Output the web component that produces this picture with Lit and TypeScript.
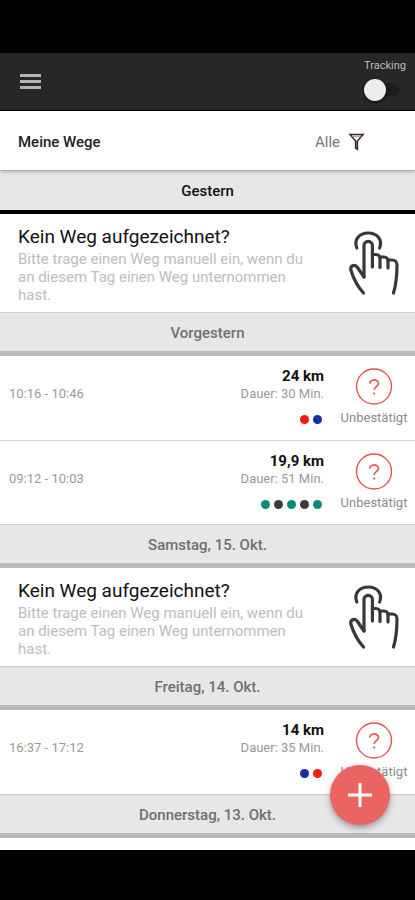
import { LitElement, html, css, nothing } from "lit";
import { customElement, property } from "lit/decorators.js";

interface Trip {
  time: string;
  distance: string;
  duration: string;
  modes: string[];
}

interface Day {
  label: string;
  active?: boolean;
  trips: Trip[];
}

const days: Day[] = [
  { label: "Gestern", active: true, trips: [] },
  {
    label: "Vorgestern",
    trips: [
      { time: "10:16 - 10:46", distance: "24 km", duration: "Dauer: 30 Min.", modes: ["red", "blue"] },
      { time: "09:12 - 10:03", distance: "19,9 km", duration: "Dauer: 51 Min.", modes: ["green", "dark", "green", "dark", "green"] },
    ],
  },
  { label: "Samstag, 15. Okt.", trips: [] },
  {
    label: "Freitag, 14. Okt.",
    trips: [{ time: "16:37 - 17:12", distance: "14 km", duration: "Dauer: 35 Min.", modes: ["blue", "red"] }],
  },
];

@customElement("day-header")
class DayHeader extends LitElement {
  @property() label = "";
  @property({ type: Boolean, reflect: true }) active = false;

  static styles = css`
    :host {
      display: block;
      border-top: 1px solid #cdcdcd;
      border-bottom: 5px solid #bababa;
      background: #e7e7e7;
    }
    :host([active]) {
      border-bottom: 4px solid #000;
    }
    h2 {
      margin: 0;
      padding-top: 2px;
      font-size: 15px;
      line-height: 36px;
      font-weight: 500;
      text-align: center;
      color: #707070;
    }
    :host([active]) h2 {
      padding-bottom: 1px;
      color: #111;
    }
  `;

  render() {
    return html`<h2>${this.label}</h2>`;
  }
}

@customElement("empty-day")
class EmptyDay extends LitElement {
  static styles = css`
    :host {
      display: flex;
      align-items: flex-start;
      justify-content: space-between;
      min-height: 98px;
      box-sizing: border-box;
      padding: 10px 12px 8px 18px;
      background: #fff;
    }
    .text {
      max-width: 300px;
    }
    h3 {
      margin: 0;
      font-size: 19px;
      line-height: 26px;
      font-weight: 400;
      color: #111;
    }
    p {
      margin: 0;
      font-size: 15px;
      line-height: 18px;
      color: #bdbdbd;
    }
    button {
      flex: none;
      margin: 0;
      padding: 5px 0 0;
      border: 0;
      background: none;
    }
    svg {
      display: block;
    }
  `;

  render() {
    return html`
      <div class="text">
        <h3>Kein Weg aufgezeichnet?</h3>
        <p>Bitte trage einen Weg manuell ein, wenn du an diesem Tag einen Weg unternommen hast.</p>
      </div>
      <button aria-label="Weg eintragen">
        <svg width="56" height="68" viewBox="0 0 56 68" fill="none" stroke="#383838" stroke-width="3.200" stroke-linecap="round" stroke-linejoin="round">
          <path d="M9.800 19C6.500 10.500 12.500 4 21.200 4S36 10.500 32.600 19" />
          <path d="M17 48V16.500a4.200 4.200 0 0 1 8.400 0V38" />
          <path d="M25.400 25.500h3.600a4 4 0 0 1 4 4V38.500" />
          <path d="M33 28h4a4 4 0 0 1 4 4V39" />
          <path d="M41 31h4.200a4.800 4.800 0 0 1 4.800 4.800c0 11-.4 18-3.500 28.200" />
          <path d="M17 48L10.500 38.500C7.500 34.500 2.700 37 4 41.500C6.500 49.500 10.500 57.500 16.500 64" />
        </svg>
      </button>
    `;
  }
}

@customElement("trip-row")
class TripRow extends LitElement {
  @property({ attribute: false }) trip!: Trip;

  static styles = css`
    :host {
      display: grid;
      grid-template-columns: 1fr auto 66px;
      column-gap: 17px;
      min-height: 84px;
      box-sizing: border-box;
      padding: 11px 8px 0 9px;
      background: #fff;
    }
    :host(:not(:first-of-type)) {
      border-top: 1px solid #d2d2d2;
    }
    .time {
      padding-top: 18px;
      font-size: 13px;
      line-height: 18px;
      color: #999;
    }
    .facts {
      display: flex;
      flex-direction: column;
      align-items: flex-end;
    }
    .distance {
      font-size: 15px;
      line-height: 18px;
      font-weight: 700;
      color: #111;
    }
    .duration {
      font-size: 13px;
      line-height: 18px;
      color: #999;
    }
    .modes {
      display: flex;
      gap: 4px;
      padding: 12px 2px 0 0;
    }
    .dot {
      width: 9px;
      height: 9px;
      border-radius: 50%;
    }
    .red {
      background: #f01c0c;
    }
    .blue {
      background: #182ca8;
    }
    .green {
      background: #0c8a74;
    }
    .dark {
      background: #3a3a3a;
    }
    button {
      display: flex;
      flex-direction: column;
      align-items: center;
      justify-content: flex-start;
      margin: 0;
      padding: 1px 0 0;
      border: 0;
      background: none;
      font: inherit;
      font-size: 13px;
      line-height: 18px;
      color: #8c8c8c;
    }
    svg {
      display: block;
      margin-bottom: 3px;
    }
  `;

  render() {
    const { time, distance, duration, modes } = this.trip;
    return html`
      <div class="time">${time}</div>
      <div class="facts">
        <div class="distance">${distance}</div>
        <div class="duration">${duration}</div>
        <div class="modes">${modes.map((m) => html`<span class="dot ${m}"></span>`)}</div>
      </div>
      <button>
        <svg width="38" height="38" viewBox="0 0 38 38" fill="none" stroke="#e5514f">
          <circle cx="19" cy="18.500" r="17.500" stroke-width="1.400" />
          <path d="M14.800 15.700C14.500 10.700 23.700 10.700 23.500 15.500C23.400 18.700 19.200 18.800 19.200 22" stroke-width="1.600" />
          <circle cx="19.200" cy="25.500" r="1.100" fill="#e5514f" stroke="none" />
        </svg>
        Unbestätigt
      </button>
    `;
  }
}

@customElement("app-root")
class AppRoot extends LitElement {
  static styles = css`
    :host {
      display: flex;
      flex-direction: column;
      min-height: 100vh;
      background: #000;
      font-family: Roboto, "Liberation Sans", sans-serif;
    }
    .status {
      height: 53px;
    }
    .nav {
      height: 50px;
    }
    .appbar {
      display: flex;
      align-items: center;
      justify-content: space-between;
      height: 58px;
      box-sizing: border-box;
      padding: 0 9px 0 20px;
      border-bottom: 1px solid #000;
      background: #272727;
    }
    button {
      margin: 0;
      padding: 0;
      border: 0;
      background: none;
      font: inherit;
    }
    svg {
      display: block;
    }
    .tracking {
      display: flex;
      flex-direction: column;
      gap: 7px;
      padding-bottom: 4px;
      font-size: 11px;
      line-height: 13px;
      color: #bdbdbd;
    }
    .tracking input {
      appearance: none;
      display: flex;
      align-items: center;
      width: 36px;
      height: 22px;
      margin: 0;
      background: radial-gradient(circle at 29px 11px, #1d1d1d 6px, transparent 7px),
        linear-gradient(#1d1d1d, #1d1d1d) 7px center / 22px 13px no-repeat;
    }
    .tracking input::before {
      content: "";
      width: 22px;
      height: 22px;
      border-radius: 50%;
      background: #ececec;
      box-shadow: 0 1px 3px #000;
    }
    .tracking input:checked {
      justify-content: flex-end;
    }
    main {
      position: relative;
      flex: 1;
      background: #fff;
    }
    .titlebar {
      position: relative;
      display: flex;
      align-items: center;
      justify-content: space-between;
      height: 59px;
      box-sizing: border-box;
      padding: 3px 50px 0 18px;
      background: #fff;
      box-shadow: 0 1px 5px rgba(0, 0, 0, 0.3);
    }
    h1 {
      margin: 0;
      font-size: 15px;
      line-height: 20px;
      font-weight: 500;
      color: #222;
    }
    .filter {
      display: flex;
      align-items: center;
      gap: 8px;
      font-size: 15px;
      line-height: 20px;
      color: #777;
    }
    .add {
      position: absolute;
      right: 25px;
      bottom: 25px;
      display: grid;
      place-items: center;
      width: 60px;
      height: 60px;
      border-radius: 50%;
      background: #eb6462;
      box-shadow: 0 3px 6px rgba(0, 0, 0, 0.35);
    }
  `;

  render() {
    return html`
      <div class="status"></div>
      <header class="appbar">
        <button aria-label="Menü">
          <svg width="21" height="16" viewBox="0 0 21 16" fill="#b4b4b4">
            <path d="M0 0h21v3H0zM0 6h21v3H0zM0 12h21v3H0z" />
          </svg>
        </button>
        <label class="tracking">
          Tracking
          <input type="checkbox" />
        </label>
      </header>
      <main>
        <div class="titlebar">
          <h1>Meine Wege</h1>
          <button class="filter">
            Alle
            <svg width="17" height="18" viewBox="0 0 17 18" fill="none" stroke="#3c2529" stroke-width="1.500">
              <path d="M2 1.500h13L9.400 8v8.300L7.600 15V8z" />
              <path d="M4 3.300h9" stroke="#999" stroke-width="1" />
            </svg>
          </button>
        </div>
        ${days.map(
          (day) => html`
            <section>
              <day-header .label=${day.label} ?active=${day.active}></day-header>
              ${day.trips.length ? nothing : html`<empty-day></empty-day>`}
              ${day.trips.map((trip) => html`<trip-row .trip=${trip}></trip-row>`)}
            </section>
          `
        )}
        <day-header label="Donnerstag, 13. Okt."></day-header>
        <button class="add" aria-label="Weg hinzufügen">
          <svg width="24" height="24" viewBox="0 0 24 24" fill="#fff">
            <path d="M10.500 0h3v10.500H24v3H13.500V24h-3V13.500H0v-3h10.500z" />
          </svg>
        </button>
      </main>
      <div class="nav"></div>
    `;
  }
}
